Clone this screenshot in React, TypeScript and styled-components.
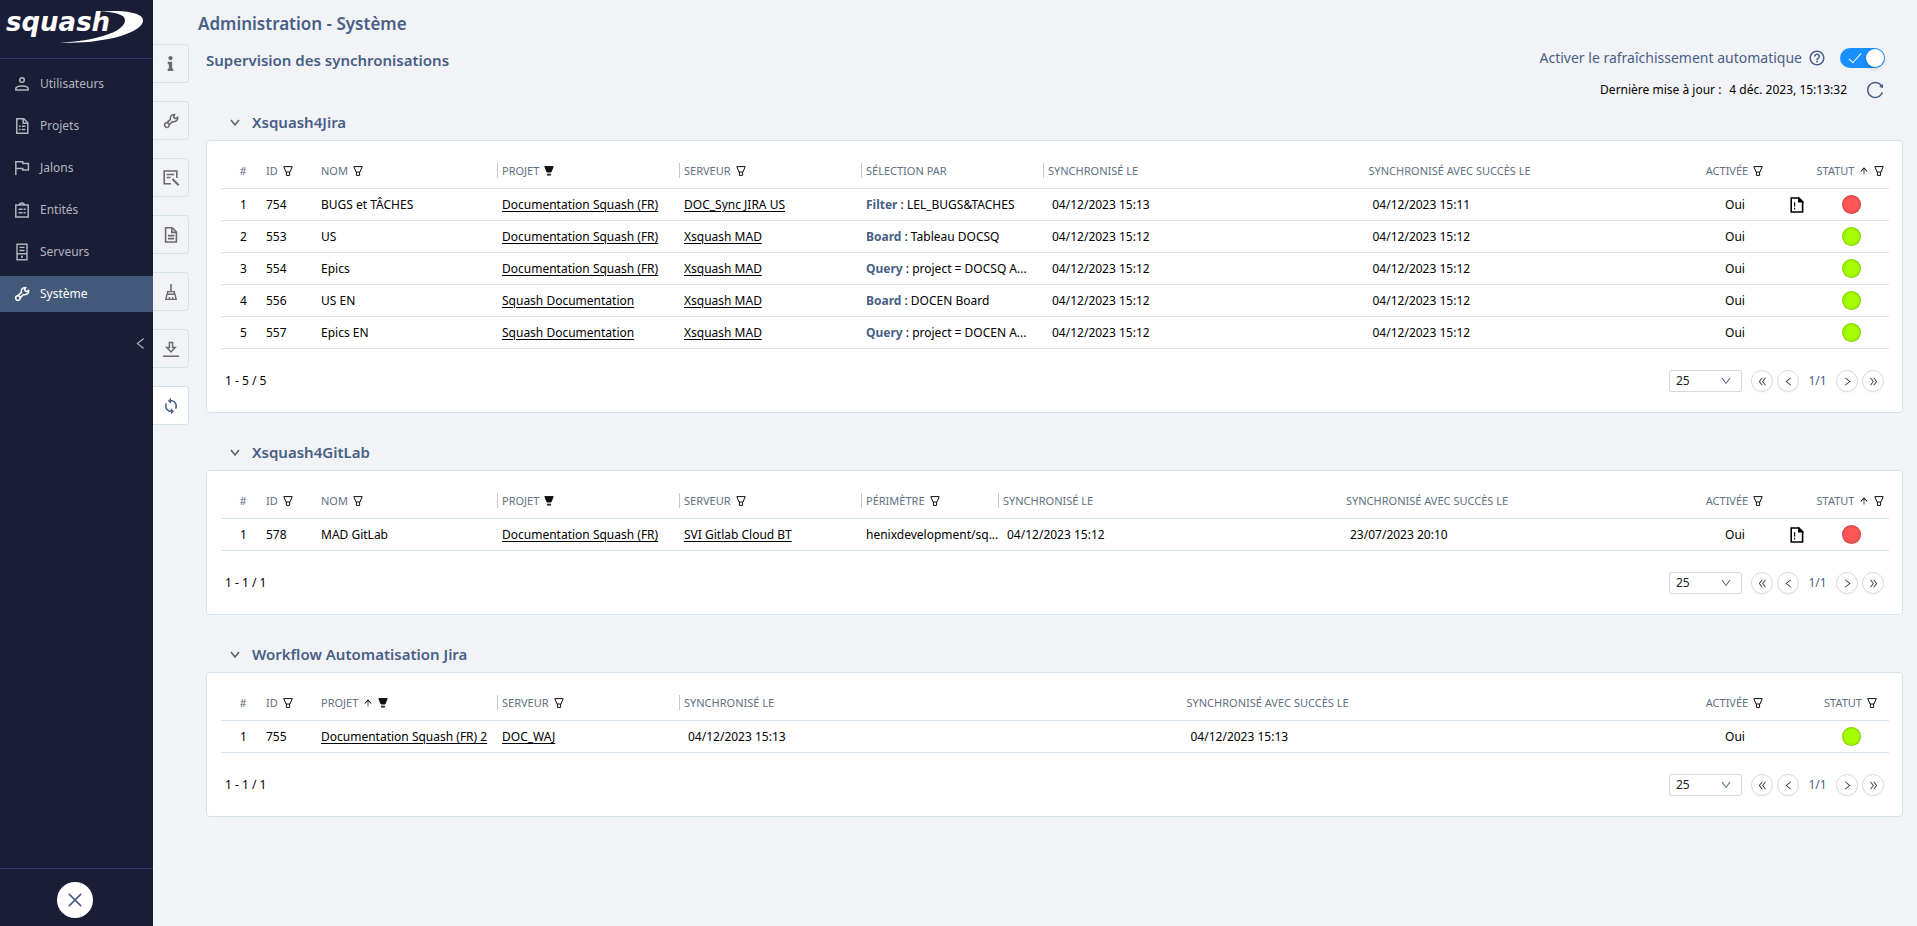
import React, { useState } from "react";
import styled, { createGlobalStyle } from "styled-components";
import {
  AiOutlineArrowUp,
  AiOutlineClose,
  AiOutlineDoubleLeft,
  AiOutlineDoubleRight,
  AiOutlineDown,
  AiOutlineLeft,
  AiOutlineReload,
  AiOutlineRight,
} from "react-icons/ai";
import { FaInfo } from "react-icons/fa";
import { MdHelpOutline, MdSync } from "react-icons/md";

const color = {
  night: "#1a1d36",
  nightLine: "#35376b",
  navText: "#b3b5bd",
  active: "#435979",
  page: "#f2f3f7",
  line: "#d6e2e9",
  heading: "#485f86",
  label: "#5f707f",
  blue: "#1890ff",
  ok: "#a6ff00",
  ko: "#ff5757",
};

const GlobalStyle = createGlobalStyle`
  *, *::before, *::after { box-sizing: border-box; }
  body {
    margin: 0;
    background: ${color.page};
    color: #000;
    font: 12px/20px "Noto Sans", "Open Sans", sans-serif;
  }
  button, select, input { font: inherit; color: inherit; margin: 0; }
  button { background: none; border: 0; padding: 0; cursor: pointer; }
  h1, h2, h3 { margin: 0; font-weight: 600; color: ${color.heading}; }
  svg { display: block; flex: none; }
`;

/* ---------- icons ---------- */

const Stroke = styled.svg`
  fill: none;
  stroke: currentColor;
`;

const UserIcon = () => (
  <Stroke width="16" height="16" viewBox="0 0 16 16" strokeWidth="1.5">
    <circle cx="8" cy="4" r="2.3" />
    <path d="M1.8 14v-1.200c0-1.800 3.200-2.800 6.200-2.800s6.200 1 6.200 2.800v1.200z" />
  </Stroke>
);
const ProjectIcon = () => (
  <Stroke width="16" height="16" viewBox="0 0 16 16" strokeWidth="1.5">
    <path d="M2.800.8h7l4 4v10.400h-11z" />
    <path d="M9.200 1v4.200h4.300M5 8.300h1.600M7.800 8.300h3.600M5 11.500h1.600M7.800 11.500h3.600" />
  </Stroke>
);
const FlagIcon = () => (
  <Stroke width="16" height="16" viewBox="0 0 16 16" strokeWidth="1.5">
    <path d="M1.800 15V1.800h7v1.700h5.600v6.600H8.800V8.600h-7" />
  </Stroke>
);
const EntityIcon = () => (
  <Stroke width="16" height="16" viewBox="0 0 16 16" strokeWidth="1.5">
    <path d="M1.800 3h12.400v12H1.800zM5.500 3a2.500 2 0 0 1 5 0M4.600 7.200h4M9.600 7.200h2M4.600 10.800h4M9.600 10.800h2" />
  </Stroke>
);
const ServerIcon = () => (
  <Stroke width="16" height="18" viewBox="0 0 16 18" strokeWidth="1.4">
    <path d="M3 1.200h10v15.600H3zM3 10.800h10M5.400 4.400h5.200M5.400 7.500h5.200" />
    <path d="M7 13.700h2" strokeWidth="2" />
  </Stroke>
);
const WrenchIcon = () => (
  <Stroke width="16" height="16" viewBox="0 0 16 16" strokeWidth="1.5" strokeLinejoin="round">
    <path d="M4.200 9.400 7.400 6.400C6.800 3.600 8.600 1.200 11.800 1.400L10.400 3.800 12.200 5.600 14.800 4.200C15 7.400 12.200 9.200 9.400 8.600L6.400 11.800" />
    <circle cx="3.900" cy="12.100" r="2.300" />
  </Stroke>
);
const BroomIcon = () => (
  <Stroke width="16" height="18" viewBox="0 0 16 18" strokeWidth="1.4">
    <path d="M8 1v7.500" strokeWidth="1.600" />
    <path d="M4.600 8.600h6.800v2.600H4.600zM4 11.200h8l1.200 5.200H2.800zM6.400 16v-2M9.600 16v-2" />
  </Stroke>
);
const InspectIcon = () => (
  <Stroke width="18" height="18" viewBox="0 0 18 18" strokeWidth="1.6">
    <path d="M9 14.800H2.200V2h12.600v7M4.600 5.500h7.400M4.600 8.500h4" />
    <path d="m10.500 10 6.200 6.200" strokeWidth="2" />
  </Stroke>
);
const DocIcon = () => (
  <Stroke width="16" height="18" viewBox="0 0 16 18" strokeWidth="1.6">
    <path d="M2.600 1.800h6.600l4.200 4.200v10H2.600z" />
    <path d="M8.800 2v4.400h4.400M5 9.600h6.200M5 12.600h6.200" />
  </Stroke>
);
const DownloadIcon = () => (
  <Stroke width="18" height="18" viewBox="0 0 18 18" strokeWidth="1.5">
    <path d="M7.400 2.600h3.200v5h2.600L9 12 4.800 7.600h2.600zM1 16.200h16" />
  </Stroke>
);
const FilterIcon = ({ filled }: { filled?: boolean }) => (
  <svg width="10" height="10" viewBox="0 0 10 10" fill="none" stroke="#111">
    <path d="M.8.600h8.400L7 6H3z" fill={filled ? "#111" : "none"} />
    <path d={filled ? "M3.400 8.200h3.200v.900H3.400z" : "M3.400 6v3.400h3.200V6"} />
  </svg>
);
const ReportIcon = () => (
  <svg width="14" height="16" viewBox="0 0 14 16" fill="none" stroke="#000" strokeWidth="1.6">
    <path d="M1.200 1h7.400l4 4v10H1.200z" />
    <path d="M8.800 1v3.800h3.800z" fill="#000" />
    <path d="M4.600 5.200v4.200M4.600 10.800v1.600" strokeWidth="1.2" />
  </svg>
);
const ChevronIcon = () => (
  <Stroke width="10" height="12" viewBox="0 0 10 12" strokeWidth="1.7">
    <path d="M1 4l4 5 4-5" />
  </Stroke>
);

/* ---------- side navigation ---------- */

const Page = styled.div`
  display: flex;
  min-height: 100vh;
`;
const Sidebar = styled.nav`
  display: flex;
  flex-direction: column;
  flex: none;
  width: 153px;
  background: ${color.night};
`;
const LogoBar = styled.div`
  height: 59px;
  border-bottom: 1px solid ${color.nightLine};
`;
const LogoText = styled.text`
  font: italic bold 26px "DejaVu Sans", sans-serif;
  fill: #fff;
`;
const NavList = styled.div`
  display: flex;
  flex-direction: column;
  gap: 6px;
  padding-top: 7px;
`;
const NavLink = styled.a<{ $active?: boolean }>`
  display: flex;
  align-items: center;
  gap: 10px;
  height: 36px;
  padding-left: 14px;
  text-decoration: none;
  color: ${(p) => (p.$active ? "#fff" : color.navText)};
  background: ${(p) => (p.$active ? color.active : "transparent")};
`;
const CollapseButton = styled.button`
  align-self: flex-end;
  margin: 24px 5px 0 0;
  color: ${color.navText};
`;
const SidebarFooter = styled.div`
  display: flex;
  justify-content: center;
  margin-top: auto;
  padding: 13px 3px 8px 0;
  border-top: 1px solid ${color.nightLine};
`;
const CloseButton = styled.button`
  display: grid;
  place-items: center;
  width: 36px;
  height: 36px;
  border-radius: 50%;
  background: #fff;
  color: ${color.heading};
`;

/* ---------- workspace ---------- */

const Workspace = styled.main`
  flex: 1;
  min-width: 0;
`;
const PageTitle = styled.h1`
  height: 44px;
  padding: 4px 0 0 45px;
  font-size: 17px;
  line-height: 40px;
`;
const Columns = styled.div`
  display: flex;
`;
const AnchorRail = styled.nav`
  display: flex;
  flex-direction: column;
  gap: 18px;
  flex: none;
`;
const Anchor = styled.a<{ $active?: boolean }>`
  display: grid;
  place-items: center;
  width: 36px;
  height: 39px;
  border: 1px solid ${color.line};
  border-left: 0;
  border-radius: 0 4px 4px 0;
  color: ${(p) => (p.$active ? color.heading : "#6b6b6b")};
  background: ${(p) => (p.$active ? "#fff" : "transparent")};
`;
const Body = styled.div`
  flex: 1;
  min-width: 0;
  padding: 0 14px 0 17px;
`;
const TopRow = styled.div`
  display: flex;
  justify-content: space-between;
  height: 64px;
  padding-right: 18px;
`;
const Subtitle = styled.h2`
  font-size: 15px;
  line-height: 32px;
`;
const RefreshRow = styled.div<{ $height: number }>`
  display: flex;
  align-items: center;
  justify-content: flex-end;
  height: ${(p) => p.$height}px;
`;
const RefreshLabel = styled.label`
  margin-right: 6px;
  font-size: 14px;
  color: ${color.heading};
`;
const Switch = styled.input`
  appearance: none;
  position: relative;
  width: 45px;
  height: 20px;
  margin-left: 14px;
  border-radius: 10px;
  background: #bfbfbf;
  cursor: pointer;
  &::after {
    content: "";
    position: absolute;
    top: 1px;
    left: 1px;
    width: 18px;
    height: 18px;
    border-radius: 50%;
    background: #fff;
    box-shadow: 0 2px 4px rgba(0, 35, 11, 0.2);
  }
  &:checked { background: ${color.blue}; }
  &:checked::after { left: 26px; }
  &:checked::before {
    content: "";
    position: absolute;
    top: 2px;
    left: 12px;
    width: 6px;
    height: 13px;
    border: solid #fff;
    border-width: 0 1px 1px 0;
    transform: rotate(42deg);
  }
`;
const IconButton = styled.button<{ $gap?: number }>`
  margin-left: ${(p) => p.$gap ?? 0}px;
  color: ${color.heading};
`;
const UpdateDate = styled.time`
  margin-left: 8px;
`;

/* ---------- tables ---------- */

const Section = styled.section`
  margin-bottom: 25px;
`;
const SectionToggle = styled.button`
  display: flex;
  align-items: center;
  gap: 12px;
  height: 32px;
  padding: 0 0 5px 24px;
  color: #666;
`;
const SectionTitle = styled.h3`
  font-size: 15px;
  line-height: 20px;
`;
const Card = styled.div`
  padding: 0 13px 0 14px;
  border: 1px solid ${color.line};
  border-radius: 4px;
  background: #fff;
`;
const Table = styled.table`
  width: 100%;
  table-layout: fixed;
  border-spacing: 0;
`;
const Col = styled.col<{ $w?: number }>`
  width: ${(p) => (p.$w ? `${p.$w}px` : "auto")};
`;
const Th = styled.th`
  padding: 22px 0 10px;
  border-bottom: 1px solid ${color.line};
  font-size: 11px;
  font-weight: 400;
  color: ${color.label};
`;
const HeadCell = styled.div<{ $center?: boolean; $divider?: boolean }>`
  display: flex;
  align-items: center;
  justify-content: ${(p) => (p.$center ? "center" : "flex-start")};
  gap: 5px;
  height: 15px;
  padding-left: 4px;
  line-height: 15px;
  white-space: nowrap;
  border-right: 1px solid ${(p) => (p.$divider ? "#c8c8c8" : "transparent")};
`;
const Td = styled.td<{ $center?: boolean; $indent?: boolean }>`
  padding: 0 0 0 ${(p) => (p.$indent ? 8 : 4)}px;
  border-bottom: 1px solid ${color.line};
  line-height: 31px;
  text-align: ${(p) => (p.$center ? "center" : "left")};
  white-space: nowrap;
  overflow: hidden;
  text-overflow: ellipsis;
`;
const CellLink = styled.a`
  color: #000;
  text-underline-offset: 2px;
`;
const Kind = styled.b`
  color: ${color.heading};
`;
const Dot = styled.span<{ $ko?: boolean }>`
  display: block;
  width: 19px;
  height: 19px;
  margin: 0 auto;
  border-radius: 50%;
  background: ${(p) => (p.$ko ? color.ko : color.ok)};
  box-shadow: inset 0 0 3px rgba(0, 0, 0, 0.4);
`;
const ReportButton = styled.button`
  display: block;
  margin: 0 auto;
`;
const Footer = styled.div`
  display: flex;
  align-items: center;
  justify-content: space-between;
  height: 63px;
  padding: 1px 5px 0 4px;
`;
const Pager = styled.div`
  display: flex;
  align-items: center;
  gap: 4px;
`;
const SizeBox = styled.div`
  position: relative;
  margin-right: 5px;
  color: ${color.heading};
  svg {
    position: absolute;
    top: 5px;
    right: 10px;
    pointer-events: none;
  }
`;
const SizeSelect = styled.select`
  appearance: none;
  display: block;
  width: 73px;
  height: 22px;
  padding: 0 6px;
  border: 1px solid #d9d9d9;
  border-radius: 2px;
  background: #fff;
  color: #222;
`;
const RoundButton = styled.button`
  display: grid;
  place-items: center;
  width: 22px;
  height: 22px;
  border: 1px solid #d9d9d9;
  border-radius: 50%;
  color: #333;
  background: #fff;
  box-shadow: 0 2px 0 rgba(0, 0, 0, 0.02);
`;
const PageCount = styled.span`
  width: 29px;
  text-align: center;
  color: ${color.heading};
`;

type Column = {
  key: string;
  label?: string;
  width?: number;
  filter?: "empty" | "filled";
  sorted?: boolean;
  divider?: boolean;
  center?: boolean;
};
type Cells = Record<string, string>;

const lead: Column[] = [
  { key: "index", label: "#", width: 41, center: true },
  { key: "id", label: "ID", width: 55, filter: "empty" },
];
const name: Column = { key: "name", label: "NOM", width: 181, filter: "empty", divider: true };
const project: Column = { key: "project", label: "PROJET", width: 182, filter: "filled", divider: true };
const server: Column = { key: "server", label: "SERVEUR", width: 182, filter: "empty", divider: true };
const dates: Column[] = [
  { key: "sync", label: "SYNCHRONISÉ LE" },
  { key: "success", label: "SYNCHRONISÉ AVEC SUCCÈS LE" },
];
const active: Column = { key: "active", label: "ACTIVÉE", width: 96, filter: "empty", center: true };
const report: Column = { key: "report", width: 28, center: true };
const status: Column = { key: "status", label: "STATUT", width: 80, filter: "empty", center: true };

const jiraColumns: Column[] = [
  ...lead, name, project, server,
  { key: "scope", label: "SÉLECTION PAR", width: 182, divider: true },
  ...dates, active, report, { ...status, sorted: true },
];
const gitlabColumns: Column[] = [
  ...lead, name, project, server,
  { key: "scope", label: "PÉRIMÈTRE", width: 137, filter: "empty", divider: true },
  ...dates, active, report, { ...status, sorted: true },
];
const workflowColumns: Column[] = [
  ...lead, { ...project, width: 181, sorted: true }, server, ...dates, active, report, status,
];

const fr = "Documentation Squash (FR)";
const en = "Squash Documentation";
const mad = "Xsquash MAD";
const d12 = "04/12/2023 15:12";
const d13 = "04/12/2023 15:13";

const jiraRows: Cells[] = [
  { id: "754", name: "BUGS et TÂCHES", project: fr, server: "DOC_Sync JIRA US", kind: "Filter", scope: "LEL_BUGS&TACHES", sync: d13, success: "04/12/2023 15:11", status: "ko" },
  { id: "553", name: "US", project: fr, server: mad, kind: "Board", scope: "Tableau DOCSQ", sync: d12, success: d12, status: "ok" },
  { id: "554", name: "Epics", project: fr, server: mad, kind: "Query", scope: "project = DOCSQ A...", sync: d12, success: d12, status: "ok" },
  { id: "556", name: "US EN", project: en, server: mad, kind: "Board", scope: "DOCEN Board", sync: d12, success: d12, status: "ok" },
  { id: "557", name: "Epics EN", project: en, server: mad, kind: "Query", scope: "project = DOCEN A...", sync: d12, success: d12, status: "ok" },
];
const gitlabRows: Cells[] = [
  { id: "578", name: "MAD GitLab", project: fr, server: "SVI Gitlab Cloud BT", scope: "henixdevelopment/sq...", sync: d12, success: "23/07/2023 20:10", status: "ko" },
];
const workflowRows: Cells[] = [
  { id: "755", project: fr + " 2", server: "DOC_WAJ", sync: d13, success: d13, status: "ok" },
];

function Cell({ column, row, index }: { column: Column; row: Cells; index: number }) {
  const value = row[column.key];
  switch (column.key) {
    case "index":
      return <Td $center>{index + 1}</Td>;
    case "project":
    case "server":
      return <Td><CellLink href="#">{value}</CellLink></Td>;
    case "scope":
      return <Td>{row.kind && <><Kind>{row.kind}</Kind>{" : "}</>}{value}</Td>;
    case "sync":
    case "success":
      return <Td $indent>{value}</Td>;
    case "active":
      return <Td $center>Oui</Td>;
    case "report":
      return (
        <Td $center>
          {row.status === "ko" && <ReportButton aria-label="Rapport d'erreur"><ReportIcon /></ReportButton>}
        </Td>
      );
    case "status":
      return <Td $center><Dot $ko={row.status === "ko"} /></Td>;
    default:
      return <Td>{value}</Td>;
  }
}

function SyncTable({ title, columns, rows }: { title: string; columns: Column[]; rows: Cells[] }) {
  const [open, setOpen] = useState(true);
  return (
    <Section>
      <SectionToggle aria-expanded={open} onClick={() => setOpen(!open)}>
        <ChevronIcon />
        <SectionTitle>{title}</SectionTitle>
      </SectionToggle>
      {open && (
        <Card>
          <Table>
            <colgroup>
              {columns.map((c) => <Col key={c.key} $w={c.width} />)}
            </colgroup>
            <thead>
              <tr>
                {columns.map((c) => (
                  <Th key={c.key} scope="col">
                    <HeadCell $center={c.center} $divider={c.divider}>
                      {c.label}
                      {c.sorted && <AiOutlineArrowUp size={10} color="#111" />}
                      {c.filter && (
                        <button aria-label={`Filtrer ${c.label}`}>
                          <FilterIcon filled={c.filter === "filled"} />
                        </button>
                      )}
                    </HeadCell>
                  </Th>
                ))}
              </tr>
            </thead>
            <tbody>
              {rows.map((row, i) => (
                <tr key={row.id}>
                  {columns.map((c) => <Cell key={c.key} column={c} row={row} index={i} />)}
                </tr>
              ))}
            </tbody>
          </Table>
          <Footer>
            <span>{`1 - ${rows.length} / ${rows.length}`}</span>
            <Pager>
              <SizeBox>
                <SizeSelect aria-label="Lignes par page" defaultValue="25">
                  <option>10</option>
                  <option>25</option>
                  <option>50</option>
                  <option>100</option>
                </SizeSelect>
                <AiOutlineDown size={12} />
              </SizeBox>
              <RoundButton aria-label="Première page"><AiOutlineDoubleLeft size={11} /></RoundButton>
              <RoundButton aria-label="Page précédente"><AiOutlineLeft size={11} /></RoundButton>
              <PageCount>1/1</PageCount>
              <RoundButton aria-label="Page suivante"><AiOutlineRight size={11} /></RoundButton>
              <RoundButton aria-label="Dernière page"><AiOutlineDoubleRight size={11} /></RoundButton>
            </Pager>
          </Footer>
        </Card>
      )}
    </Section>
  );
}

const navItems = [
  { label: "Utilisateurs", icon: <UserIcon /> },
  { label: "Projets", icon: <ProjectIcon /> },
  { label: "Jalons", icon: <FlagIcon /> },
  { label: "Entités", icon: <EntityIcon /> },
  { label: "Serveurs", icon: <ServerIcon /> },
  { label: "Système", icon: <WrenchIcon />, active: true },
];

const anchors = [
  { label: "Informations", icon: <FaInfo size={15} /> },
  { label: "Paramètres", icon: <WrenchIcon /> },
  { label: "Messages", icon: <InspectIcon /> },
  { label: "Journaux", icon: <DocIcon /> },
  { label: "Nettoyage", icon: <BroomIcon /> },
  { label: "Téléchargements", icon: <DownloadIcon /> },
  { label: "Synchronisations", icon: <MdSync size={18} />, active: true },
];

export default function App() {
  const [auto, setAuto] = useState(true);
  return (
    <>
      <GlobalStyle />
      <Page>
        <Sidebar aria-label="Administration">
          <LogoBar>
            <svg width="153" height="58" viewBox="0 0 153 58" role="img" aria-label="squash">
              <LogoText x="6" y="31">squash</LogoText>
              <path
                d="M99 11.6c22-1.6 44 .2 44 9C143 33 103 44.500 60 42.600c34-1.400 65-10.600 65-22.400 0-5.400-9-8-26-8.600z"
                fill="#fff"
              />
            </svg>
          </LogoBar>
          <NavList>
            {navItems.map((n) => (
              <NavLink key={n.label} href="#" $active={n.active}>
                {n.icon}
                {n.label}
              </NavLink>
            ))}
          </NavList>
          <CollapseButton aria-label="Réduire le menu"><AiOutlineLeft size={15} /></CollapseButton>
          <SidebarFooter>
            <CloseButton aria-label="Fermer"><AiOutlineClose size={20} /></CloseButton>
          </SidebarFooter>
        </Sidebar>
        <Workspace>
          <PageTitle>Administration - Système</PageTitle>
          <Columns>
            <AnchorRail aria-label="Sections">
              {anchors.map((a) => (
                <Anchor key={a.label} href="#" aria-label={a.label} $active={a.active}>{a.icon}</Anchor>
              ))}
            </AnchorRail>
            <Body>
              <TopRow>
                <Subtitle>Supervision des synchronisations</Subtitle>
                <div>
                  <RefreshRow $height={28}>
                    <RefreshLabel htmlFor="auto-refresh">Activer le rafraîchissement automatique</RefreshLabel>
                    <IconButton aria-label="Aide"><MdHelpOutline size={18} /></IconButton>
                    <Switch
                      id="auto-refresh"
                      type="checkbox"
                      role="switch"
                      checked={auto}
                      onChange={(e) => setAuto(e.target.checked)}
                    />
                  </RefreshRow>
                  <RefreshRow $height={36}>
                    <span>Dernière mise à jour :</span>
                    <UpdateDate>4 déc. 2023, 15:13:32</UpdateDate>
                    <IconButton aria-label="Actualiser" $gap={18}><AiOutlineReload size={20} /></IconButton>
                  </RefreshRow>
                </div>
              </TopRow>
              <SyncTable title="Xsquash4Jira" columns={jiraColumns} rows={jiraRows} />
              <SyncTable title="Xsquash4GitLab" columns={gitlabColumns} rows={gitlabRows} />
              <SyncTable title="Workflow Automatisation Jira" columns={workflowColumns} rows={workflowRows} />
            </Body>
          </Columns>
        </Workspace>
      </Page>
    </>
  );
}
